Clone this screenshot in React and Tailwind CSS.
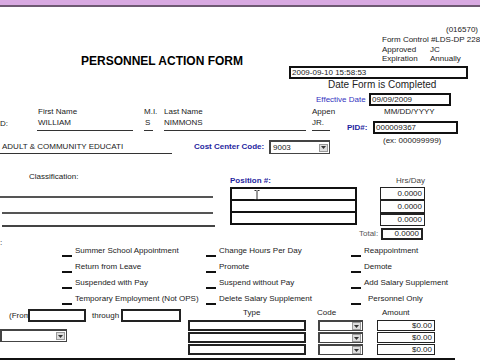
import React from 'react';

const ink = 'text-[#222]';

function Select({ className, value }) {
  return (
    <div className={`flex items-center justify-between border border-[#444] border-t-2 border-l-2 bg-white pl-[2px] pr-[1px] ${className}`}>
      <span className="leading-[10px]">{value}</span>
      <div className="w-[9px] h-[8px] bg-[#ddd] border border-[#999] flex items-center justify-center">
        <svg width="5" height="3" viewBox="0 0 5 3">
          <path d="M0 0 L5 0 L2.5 3 Z" fill="#333" />
        </svg>
      </div>
    </div>
  );
}

function Check({ label, w, gap = 'ml-[3px]' }) {
  return (
    <div className={`flex items-start ${w}`}>
      <div className="mt-[12px] w-[10px] h-[2px] bg-[#111]" />
      <span className={`${gap} mt-[3px] leading-[10px] whitespace-nowrap`}>{label}</span>
    </div>
  );
}

const checkRows = [
  ['Summer School Appointment', 'Change Hours Per Day', 'Reappointment'],
  ['Return from Leave', 'Promote', 'Demote'],
  ['Suspended with Pay', 'Suspend without Pay', 'Add Salary Supplement'],
  ['Temporary Employment (Not OPS)', 'Delete Salary Supplement', 'Personnel Only'],
];

export default function App() {
  return (
    <div className={`w-[480px] h-[360px] overflow-hidden bg-white font-['Liberation_Sans',Arial,sans-serif] text-[8px] leading-[10px] ${ink}`}>
      {/* window chrome strip */}
      <div className="h-[5px] bg-[#d9aae2]" />
      <div className="h-[2px] bg-[#6f5a73]" />

      {/* header */}
      <div className="flex">
        <div className="w-[289px] pt-[47px] pl-[81px]">
          <div className="text-[12px] leading-[14px] font-bold text-black">PERSONNEL ACTION FORM</div>
        </div>
        <div className="w-[191px] overflow-hidden pt-[18px]">
          <div className="h-[10px] text-right pr-[2px]">(016570)</div>
          <div className="h-[10px] ml-[93px] whitespace-nowrap">Form Control #LDS-DP 228</div>
          <div className="h-[9px] ml-[93px] flex"><span className="w-[48px]">Approved</span><span>JC</span></div>
          <div className="h-[9px] ml-[93px] flex"><span className="w-[48px]">Expiration</span><span>Annually</span></div>
          <div className="mt-[3px] w-[179px] h-[13px] border-2 border-[#111] pl-[1px] leading-[9px]">2009-09-10 15:58:53</div>
          <div className="ml-[39px] text-[10px] leading-[12px]">Date Form is Completed</div>
          <div className="mt-[2px] flex items-center h-[13px]">
            <span className="ml-[27px] w-[53px] text-[#3434c0]">Effective Date</span>
            <div className="w-[82px] h-[13px] border-2 border-[#111] pl-[1px] leading-[9px]">09/09/2009</div>
          </div>
        </div>
      </div>

      {/* name labels */}
      <div className="mt-[1px] flex h-[10px]">
        <span className="ml-[38px] w-[106px]">First Name</span>
        <span className="w-[20px]">M.I.</span>
        <span className="w-[148px]">Last Name</span>
        <span className="w-[72px]">Appen</span>
        <span>MM/DD/YYYY</span>
      </div>

      {/* name values */}
      <div className="flex items-start h-[17px]">
        <span className="w-[37px] mt-[2px]">D:</span>
        <div className="w-[96px] h-[14px] pt-[1px] pl-[1px] border-b border-[#333]">WILLIAM</div>
        <div className="ml-[11px] w-[9px] h-[14px] pt-[1px] pl-[1px] border-b border-[#333]">S</div>
        <div className="ml-[11px] w-[142px] h-[14px] pt-[1px] border-b border-[#333]">NIMMONS</div>
        <div className="ml-[6px] w-[18px] h-[14px] pt-[1px] border-b border-[#333]">JR.</div>
        <span className="ml-[17px] w-[26px] mt-[6px] font-bold text-[#1f1fa0]">PID#:</span>
        <div className="mt-[4px] w-[85px] h-[13px] border-2 border-[#111] pl-[1px] leading-[9px]">000009367</div>
      </div>

      {/* org / cost center */}
      <div className="flex items-start h-[20px]">
        <div className="mt-[7px] w-[172px] h-[13px] pt-[1px] pl-[2px] border-b border-[#333] whitespace-nowrap">ADULT &amp; COMMUNITY EDUCATI</div>
        <span className="ml-[22px] w-[75px] mt-[8px] font-bold text-[#1f1fa0] whitespace-nowrap">Cost Center Code:</span>
        <Select className="mt-[6px] w-[61px] h-[14px]" value="9003" />
        <span className="ml-[53px] mt-[2px]">(ex: 000099999)</span>
      </div>

      {/* classification / position / hours */}
      <div className="flex items-start h-[89px]">
        <div className="w-[230px] pt-[18px]">
          <div className="ml-[29px] h-[10px]">Classification:</div>
          <div className="mt-[14px] w-[213px] h-[2px] bg-[#555]" />
          <div className="mt-[14px] ml-[2px] w-[211px] h-[2px] bg-[#555]" />
          <div className="mt-[11px] ml-[2px] w-[213px] h-[2px] bg-[#444]" />
          <div className="mt-[11px] h-[10px]">:</div>
        </div>
        <div className="w-[129px] pt-[22px]">
          <div className="h-[10px] font-bold text-[#1f1fa0]">Position #:</div>
          <div className="mt-[1px] w-[127px] border-2 border-[#111]">
            <div className="h-[12px] border-b-2 border-[#111] pl-[22px] pt-[1px]">
              <svg width="6" height="10" viewBox="0 0 6 10">
                <path d="M0.5 0.5 H2.5 M3.5 0.5 H5.5 M3 1 V9 M0.5 9.5 H2.5 M3.5 9.5 H5.5" stroke="#333" strokeWidth="1" fill="none" />
              </svg>
            </div>
            <div className="h-[12px] border-b-2 border-[#111]" />
            <div className="h-[10px]" />
          </div>
        </div>
        <div className="pt-[22px]">
          <div className="ml-[37px] h-[10px] text-[#444]">Hrs/Day</div>
          <div className="mt-[1px] ml-[21px] w-[45px]">
            <div className="h-[13px] border border-[#222] text-right pr-[2px] leading-[11px]">0.0000</div>
            <div className="h-[13px] border border-[#222] text-right pr-[2px] leading-[11px]">0.0000</div>
            <div className="h-[13px] border border-[#222] border-t-2 text-right pr-[2px] leading-[10px]">0.0000</div>
          </div>
          <div className="mt-[2px] flex items-center h-[12px]">
            <span className="w-[22px] text-[#555]">Total:</span>
            <div className="w-[42px] h-[12px] border-2 border-[#222] text-right pr-[2px] leading-[8px]">0.0000</div>
          </div>
        </div>
      </div>

      {/* action checkboxes */}
      <div className="pl-[62px]">
        {checkRows.map((row, i) => (
          <div key={i} className="flex h-[16px]">
            <Check label={row[0]} w="w-[144px]" />
            <Check label={row[1]} w="w-[145px]" />
            <Check label={row[2]} w="" gap={i === 3 ? 'ml-[7px]' : 'ml-[3px]'} />
          </div>
        ))}
      </div>

      {/* dates / supplements */}
      <div className="flex items-start h-[51px]">
        <div className="w-[188px]">
          <div className="mt-[2px] flex items-center h-[13px]">
            <span className="ml-[9px] w-[19px]">(From</span>
            <div className="w-[58px] h-[13px] border-2 border-[#222] bg-white" />
            <span className="ml-[6px] w-[29px]">through</span>
            <div className="w-[60px] h-[13px] border-2 border-[#222] bg-white" />
          </div>
          <Select className="mt-[7px] w-[67px] h-[13px]" value="" />
        </div>
        <div className="w-[130px]">
          <div className="mt-[1px] ml-[55px] h-[10px]">Type</div>
          <div className="mt-[2px] flex flex-col gap-[1px]">
            <div className="w-[118px] h-[11px] border-2 border-[#222]" />
            <div className="w-[118px] h-[11px] border-2 border-[#222]" />
            <div className="w-[118px] h-[11px] border-2 border-[#222]" />
          </div>
        </div>
        <div className="w-[59px]">
          <div className="mt-[1px] h-[10px] -ml-[1px]">Code</div>
          <div className="mt-[2px] flex flex-col gap-[1px]">
            <Select className="w-[45px] h-[11px]" value="" />
            <Select className="w-[45px] h-[11px]" value="" />
            <Select className="w-[45px] h-[11px]" value="" />
          </div>
        </div>
        <div>
          <div className="mt-[1px] ml-[5px] h-[10px]">Amount</div>
          <div className="mt-[2px] flex flex-col gap-[1px]">
            <div className="w-[58px] h-[11px] border border-[#222] text-right pr-[2px] leading-[9px]">$0.00</div>
            <div className="w-[58px] h-[11px] border border-[#222] text-right pr-[2px] leading-[9px]">$0.00</div>
            <div className="w-[58px] h-[11px] border border-[#222] text-right pr-[2px] leading-[9px]">$0.00</div>
          </div>
        </div>
      </div>
      <div className="w-[455px] h-[2px] bg-[#111]" />
    </div>
  );
}
